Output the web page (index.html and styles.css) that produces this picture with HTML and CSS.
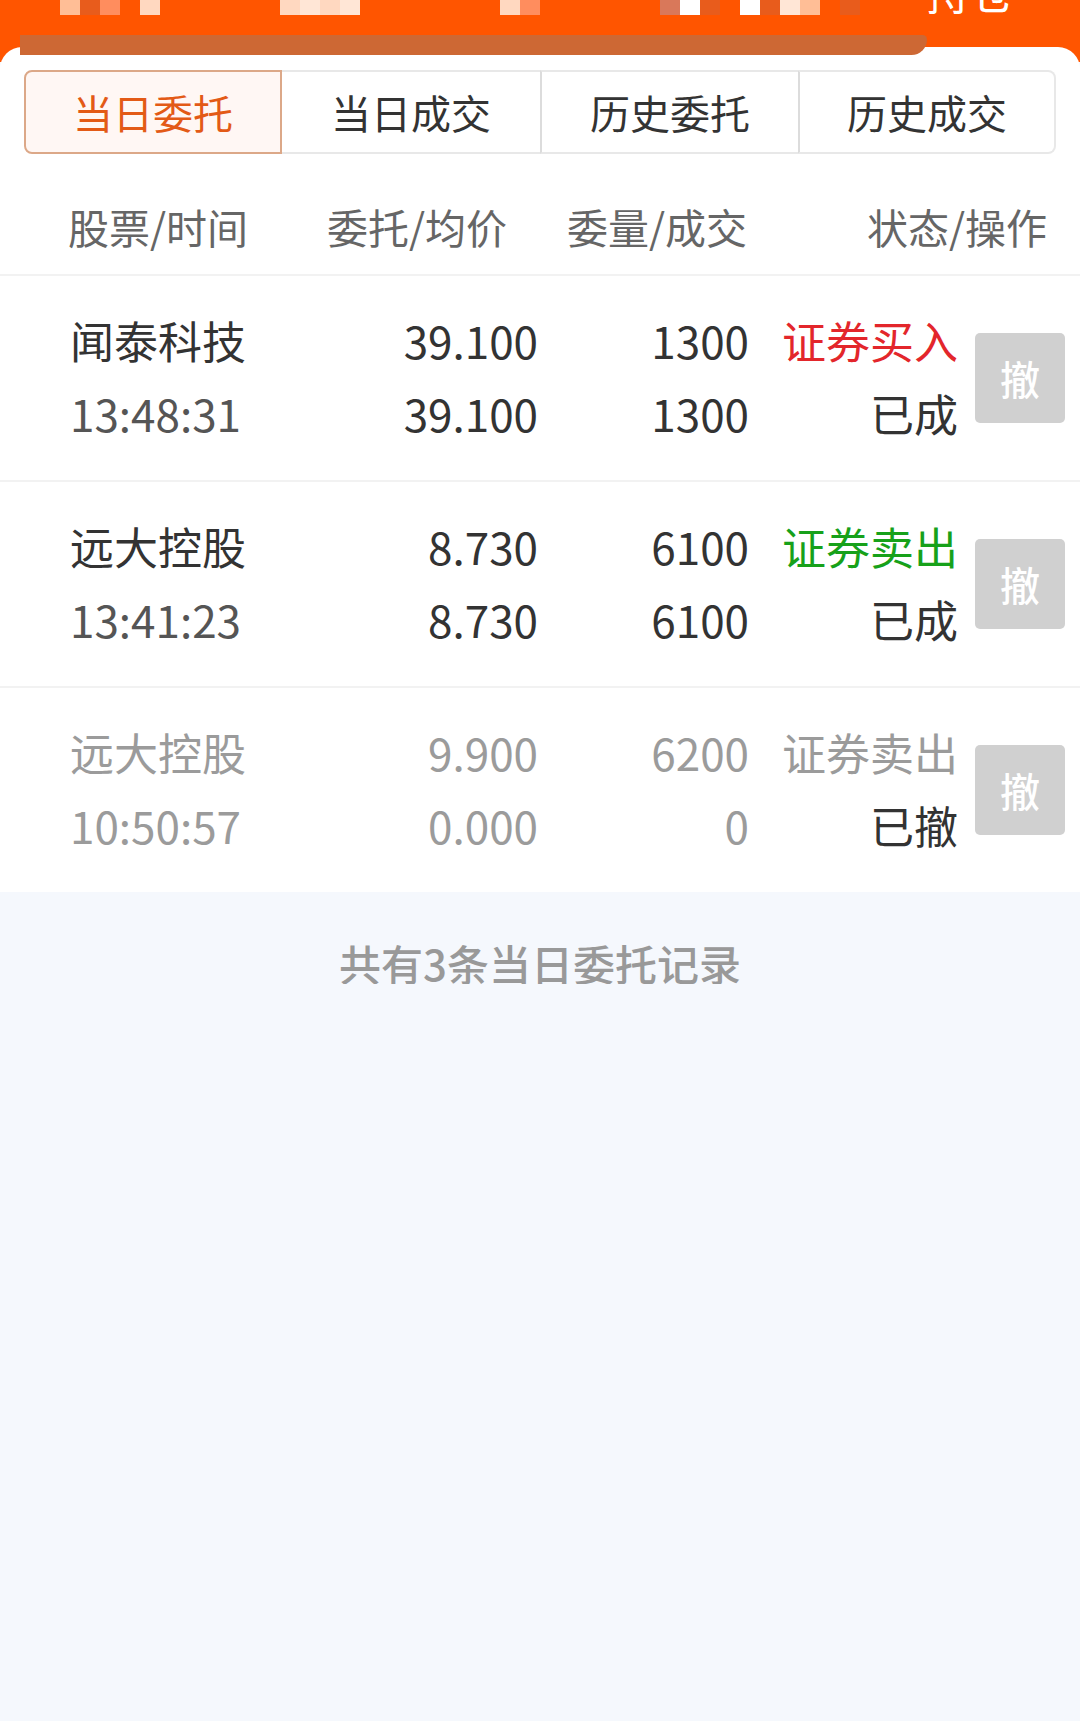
FILE: index.html
```html
<!DOCTYPE html>
<html lang="zh-CN">
<head>
    <meta charset="UTF-8">
    <meta name="viewport" content="width=device-width, initial-scale=1.0">
    <title>当日委托</title>
    <link rel="stylesheet" href="styles.css">
</head>
<body>
    <header class="topbar">
        <div class="mosaic">
            <i class="a"></i><i class="b"></i><i class="c"></i><i></i><i class="d"></i>
            <i></i><i></i><i></i><i></i><i></i><i></i>
            <i class="d"></i><i class="e"></i><i class="d"></i><i class="e"></i>
            <i></i><i></i><i></i><i></i><i></i><i></i><i></i>
            <i class="d"></i><i class="c"></i>
            <i></i><i></i><i></i><i></i><i></i><i></i>
            <i class="f"></i><i class="w"></i><i class="b"></i><i></i><i class="w"></i><i class="b"></i><i class="e"></i><i class="a"></i><i></i><i class="b"></i>
        </div>
        <span class="topbar-link">持仓</span>
        <div class="blur-bar"></div>
    </header>

    <main class="card">
        <nav class="tabs">
            <div class="tab active">当日委托</div>
            <div class="tab">当日成交</div>
            <div class="tab">历史委托</div>
            <div class="tab">历史成交</div>
        </nav>

        <div class="thead">
            <span>股票/时间</span>
            <span>委托/均价</span>
            <span>委量/成交</span>
            <span>状态/操作</span>
        </div>

        <div class="order">
            <div class="cell name"><b>闻泰科技</b><em>13:48:31</em></div>
            <div class="cell num"><b>39.100</b><b>39.100</b></div>
            <div class="cell num"><b>1300</b><b>1300</b></div>
            <div class="cell num"><b class="buy">证券买入</b><b>已成</b></div>
            <button class="cancel">撤</button>
        </div>

        <div class="order">
            <div class="cell name"><b>远大控股</b><em>13:41:23</em></div>
            <div class="cell num"><b>8.730</b><b>8.730</b></div>
            <div class="cell num"><b>6100</b><b>6100</b></div>
            <div class="cell num"><b class="sell">证券卖出</b><b>已成</b></div>
            <button class="cancel">撤</button>
        </div>

        <div class="order done">
            <div class="cell name"><b>远大控股</b><em>10:50:57</em></div>
            <div class="cell num"><b>9.900</b><b>0.000</b></div>
            <div class="cell num"><b>6200</b><b>0</b></div>
            <div class="cell num"><b>证券卖出</b><b class="state">已撤</b></div>
            <button class="cancel">撤</button>
        </div>
    </main>

    <p class="summary">共有3条当日委托记录</p>
</body>
</html>
```

FILE: styles.css
```css
* {
    box-sizing: border-box;
}
body {
    margin: 0;
    background: #f5f8fd;
    font-family: "Noto Sans CJK SC", "Noto Sans", sans-serif;
    color: #333;
}

/* orange top bar */
.topbar {
    position: relative;
    height: 62px;
    background: #ff5500;
    display: flex;
    overflow: hidden;
}
.mosaic {
    display: flex;
    height: 15px;
    margin-left: 60px;
}
.mosaic i {
    width: 20px;
    height: 15px;
}
.mosaic .a { background: #ffbe96; }
.mosaic .b { background: #e85c1c; }
.mosaic .c { background: #ff8d5e; }
.mosaic .d { background: #ffd8c0; }
.mosaic .e { background: #ffe6d6; }
.mosaic .f { background: #d9785a; }
.mosaic .w { background: #fff; }
.topbar-link {
    margin-left: 66px;
    margin-top: -31px;
    font-size: 44px;
    line-height: 44px;
    color: #fff;
}
.blur-bar {
    position: absolute;
    left: 20px;
    top: 35px;
    width: 907px;
    height: 20px;
    background: #cd6834;
    border-radius: 0 8px 28px 0;
    z-index: 2;
}

.card {
    position: relative;
    margin-top: -15px;
    background: #fff;
    border-radius: 22px 22px 0 0;
    padding-top: 23px;
}

/* tabs */
.tabs {
    display: flex;
    margin: 0 24px;
}
.tab {
    width: 258px;
    height: 84px;
    display: flex;
    align-items: center;
    justify-content: center;
    font-size: 40px;
    color: #333;
    border: 2px solid #e8e8e8;
    border-left-color: #dcdcdc;
    border-right: none;
}
.tab:last-child {
    border-right: 2px solid #e8e8e8;
    border-radius: 0 8px 8px 0;
}
.tab.active {
    color: #e35a16;
    background: #fff7f4;
    border: 2px solid #dca888;
    border-radius: 8px 0 0 8px;
}
.tab.active + .tab {
    border-left: none;
}

/* table header */
.thead {
    display: grid;
    grid-template-columns: 259px 240px 300px auto;
    align-items: end;
    height: 120px;
    padding: 0 0 28px 68px;
    font-size: 41px;
    line-height: 40px;
    color: #666;
}

/* order rows */
.order {
    display: grid;
    grid-template-columns: 268px 200px 211px 209px 1fr;
    align-items: center;
    height: 206px;
    padding: 0 15px 0 70px;
    border-top: 2px solid #f2f2f2;
}
.cell {
    margin-top: -3px;
}
.cell b,
.cell em {
    display: block;
    font-weight: normal;
    font-style: normal;
    font-size: 44px;
    line-height: 73px;
    white-space: nowrap;
}
.cell em {
    color: #555;
}
.num {
    text-align: right;
}
.buy {
    color: #e3262b;
}
.sell {
    color: #17a11a;
}
.done b,
.done em {
    color: #9b9b9b;
}
.done .state {
    color: #333;
}
.cancel {
    justify-self: end;
    width: 90px;
    height: 90px;
    border: none;
    border-radius: 5px;
    background: #d0d0d0;
    color: #fff;
    font-family: inherit;
    font-size: 40px;
    font-weight: 500;
    padding: 0;
}

.summary {
    margin: 0;
    padding-top: 50px;
    text-align: center;
    font-size: 42px;
    line-height: 42px;
    font-weight: 500;
    color: #999;
}
```
